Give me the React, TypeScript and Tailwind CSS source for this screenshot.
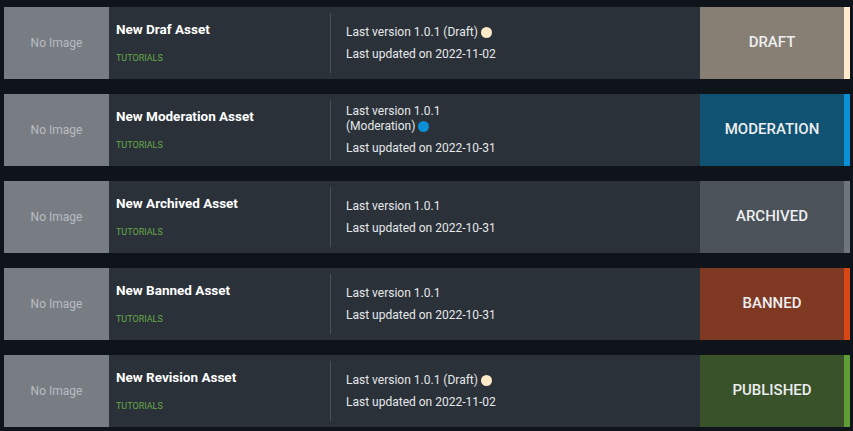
type Status = "draft" | "moderation" | "archived" | "banned" | "published";

interface Asset {
  title: string;
  category: string;
  version: string;
  versionNote?: string;
  dot?: "cream" | "blue";
  wrapNote?: boolean;
  updated: string;
  status: Status;
}

const assets: Asset[] = [
  { title: "New Draf Asset", category: "TUTORIALS", version: "1.0.1", versionNote: "(Draft)", dot: "cream", updated: "2022-11-02", status: "draft" },
  { title: "New Moderation Asset", category: "TUTORIALS", version: "1.0.1", versionNote: "(Moderation)", dot: "blue", wrapNote: true, updated: "2022-10-31", status: "moderation" },
  { title: "New Archived Asset", category: "TUTORIALS", version: "1.0.1", updated: "2022-10-31", status: "archived" },
  { title: "New Banned Asset", category: "TUTORIALS", version: "1.0.1", updated: "2022-10-31", status: "banned" },
  { title: "New Revision Asset", category: "TUTORIALS", version: "1.0.1", versionNote: "(Draft)", dot: "cream", updated: "2022-11-02", status: "published" },
];

const statusStyles: Record<Status, { box: string; strip: string; label: string }> = {
  draft: { box: "bg-[#877f74]", strip: "bg-[#fdebcb]", label: "DRAFT" },
  moderation: { box: "bg-[#0f5271]", strip: "bg-[#0a8fd6]", label: "MODERATION" },
  archived: { box: "bg-[#4b525a]", strip: "bg-[#6f757c]", label: "ARCHIVED" },
  banned: { box: "bg-[#7f3922]", strip: "bg-[#d84613]", label: "BANNED" },
  published: { box: "bg-[#3a5229]", strip: "bg-[#5f9d36]", label: "PUBLISHED" },
};

const Dot = ({ color }: { color: "cream" | "blue" }) => (
  <span
    className={`ml-[3px] inline-block h-[11px] w-[11px] rounded-full ${
      color === "cream" ? "bg-[#fde9c8]" : "bg-[#0a8fd6]"
    }`}
  />
);

const AssetRow = ({ asset }: { asset: Asset }) => {
  const s = statusStyles[asset.status];
  return (
    <div className="flex h-[72px] bg-[#2a3139]">
      <div className="flex w-[105px] shrink-0 items-center justify-center bg-[#787d84] text-[12px] text-[#b8bcc1]">
        No Image
      </div>
      <div className="my-[6px] w-[222px] shrink-0 border-r border-[#4a5058] pl-[7px] pt-[6px]">
        <div className="text-[13.5px] font-bold leading-[20px] text-white">{asset.title}</div>
        <div className="mt-[13px] text-[9px] leading-[12px] text-[#68a74a]">{asset.category}</div>
      </div>
      <div className="flex flex-1 flex-col justify-center gap-[7px] pl-[15px] text-[12px] leading-[15px] text-[#e6e8ea]">
        {asset.wrapNote ? (
          <div>
            <div>Last version {asset.version}</div>
            <div className="flex items-center">
              {asset.versionNote}
              {asset.dot && <Dot color={asset.dot} />}
            </div>
          </div>
        ) : (
          <div className="flex items-center">
            Last version {asset.version}
            {asset.versionNote && <>&nbsp;{asset.versionNote}</>}
            {asset.dot && <Dot color={asset.dot} />}
          </div>
        )}
        <div>Last updated on {asset.updated}</div>
      </div>
      <div className={`flex w-[144px] shrink-0 items-center justify-center pb-[1px] text-[15px] font-medium text-[#eceef0] ${s.box}`}>
        {s.label}
      </div>
      <div className={`w-[6px] shrink-0 ${s.strip}`} />
    </div>
  );
};

export default function App() {
  return (
    <div
      className="flex min-h-[431px] flex-col gap-[15px] bg-[#0f141b] pb-[4px] pl-[4px] pr-[3px] pt-[7px]"
      style={{ fontFamily: "Roboto, 'Liberation Sans', sans-serif" }}
    >
      {assets.map((a) => (
        <AssetRow key={a.title} asset={a} />
      ))}
    </div>
  );
}
